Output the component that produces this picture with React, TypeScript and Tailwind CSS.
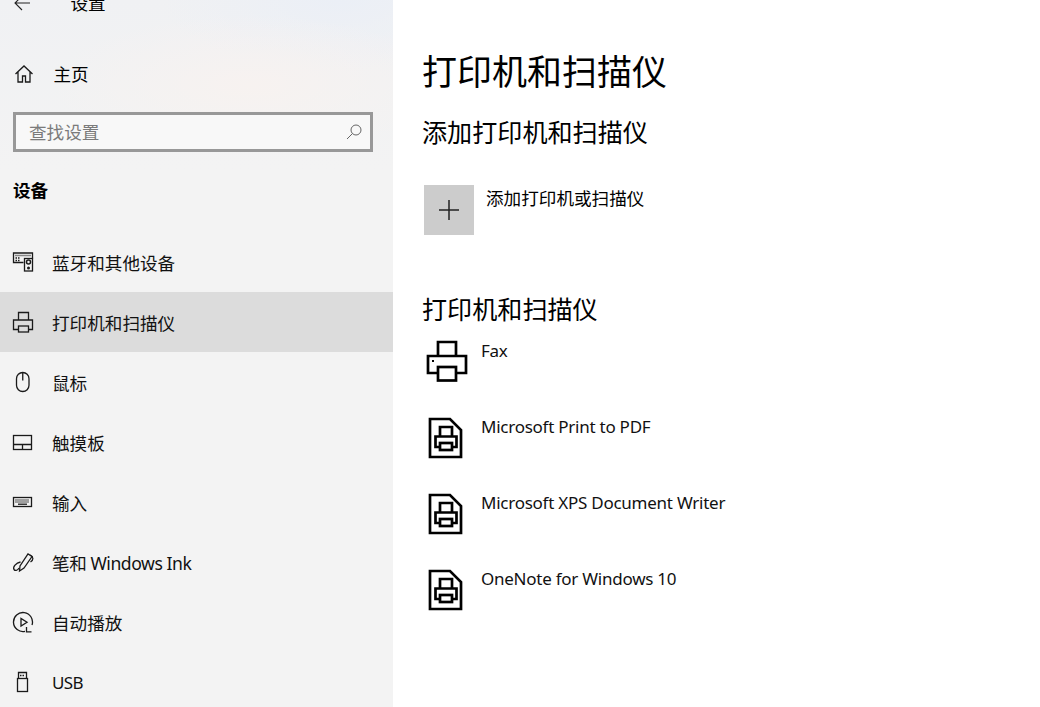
import React from "react";

function Ic({ children }: { children: React.ReactNode }) {
  return (
    <svg width={22} height={22} viewBox="0 0 22 22" fill="none" stroke="currentColor" strokeWidth={1.3} className="shrink-0 text-[#1a1a1a]">
      {children}
    </svg>
  );
}

const icons: Record<string, React.ReactNode> = {
  bt: (
    <Ic>
      <path d="M11.500 11.500H1.500V2H20.500V7.500" />
      <path d="M3.500 4.500h15" strokeDasharray="1 1" strokeWidth="1.500" />
      <path d="M3.500 7h5M3.500 9.500h5" strokeDasharray="1.500 1" strokeWidth="1.300" />
      <rect x="12.500" y="7.500" width="8" height="12.500" strokeWidth="1.300" />
      <circle cx="16.500" cy="11" r="2" strokeWidth="1.500" />
      <circle cx="16.500" cy="17" r="1.500" fill="currentColor" stroke="none" />
    </Ic>
  ),
  printer: (
    <Ic>
      <path d="M6.500 9V1.500H16.500V9M6.500 18.500H1.500V9H20.500V18.500H16.500" />
      <rect x="6.500" y="15" width="10" height="6" />
    </Ic>
  ),
  mouse: (
    <Ic>
      <rect x="4.500" y="1.500" width="12.500" height="19" rx="6.250" />
      <path d="M10.750 2v7.500" />
    </Ic>
  ),
  pad: (
    <Ic>
      <rect x="1.500" y="4.500" width="18" height="14" />
      <path d="M1.500 13.500h18M10.500 13.500v5" />
    </Ic>
  ),
  kbd: (
    <Ic>
      <rect x="1.500" y="6.500" width="18" height="9" />
      <path d="M3.500 9h14M3.500 11h14" strokeDasharray="1 1" />
      <path d="M6 13.200h9" />
    </Ic>
  ),
  pen: (
    <Ic>
      <path d="M7.500 20 8 15 16 3l4 2.500L12 17z" />
      <path d="M18 4c4 2 3.500 5 .5 7" />
      <path d="M8.500 11C4 12 .5 16 2 18.500 3.500 20.500 6 19 7 17" />
    </Ic>
  ),
  play: (
    <Ic>
      <path d="M13 20.300A9.500 9.500 0 1 1 20 14" />
      <path d="M9 7.500v7.500l6-3.750z" />
      <path d="M14.500 16v4.800h5" />
    </Ic>
  ),
  usb: (
    <Ic>
      <rect x="5.500" y="7.500" width="10" height="13" />
      <path d="M6.500 7.500V1.500h8v6" />
      <path d="M8 4.500h5" strokeDasharray="1.500 1" />
    </Ic>
  ),
};

const nav: [string, string, string, boolean?][] = [
  ["bt", "蓝牙和其他设备", "pt-[2px] text-[17.600px] text-[#111]"],
  ["printer", "打印机和扫描仪", "pt-[2px] text-[17.600px] text-[#111]", true],
  ["mouse", "鼠标", "pt-[2px] text-[17.600px] text-[#111]"],
  ["pad", "触摸板", "pt-[2px] text-[17.600px] text-[#111]"],
  ["kbd", "输入", "pt-[2px] text-[17.600px] text-[#111]"],
  ["pen", "笔和 Windows Ink", "pt-[2px] text-[17.600px] tracking-[-0.450px] text-[#111]"],
  ["play", "自动播放", "pt-[2px] text-[17.600px] text-[#111]"],
  ["usb", "USB", "pt-[2px] text-[17px] tracking-[-0.600px] text-[#111]"],
];

function BigPrinter() {
  return (
    <svg width="42" height="42" viewBox="0 0 42 42" fill="none" stroke="#000" strokeWidth="2.700" className="-ml-px shrink-0">
      <path d="M12 16V2h18v14" />
      <path d="M12 33H2V16h38v17H30" />
      <rect x="12" y="27" width="18" height="13.500" />
      <rect x="6" y="20" width="2" height="2" fill="#000" stroke="none" />
    </svg>
  );
}

function DocPrinter() {
  return (
    <svg width="36" height="42" viewBox="0 0 36 42" fill="none" stroke="#000" strokeWidth="2.700" className="mt-[2px] ml-px shrink-0">
      <path d="M2 2h20l11 11v27H2z" />
      <path d="M12 19.500V10h12v9.500" />
      <path d="M12 30H7.500V19.500h21V30H24" />
      <rect x="12" y="26" width="12" height="7" />
    </svg>
  );
}

const list: [string, boolean][] = [
  ["Fax", true],
  ["Microsoft Print to PDF", false],
  ["Microsoft XPS Document Writer", false],
  ["OneNote for Windows 10", false],
];

export default function App() {
  return (
    <div
      className="flex h-[707px] w-[1040px] overflow-hidden bg-white text-black"
      style={{ fontFamily: '"Noto Sans", "Noto Sans CJK SC", sans-serif' }}
    >
      <aside className="flex w-[393px] shrink-0 flex-col bg-[#f3f3f3] bg-[radial-gradient(ellipse_200px_70px_at_250px_85px,#f7f2f0,transparent),radial-gradient(ellipse_180px_70px_at_340px_0px,#ebeff6,transparent),linear-gradient(180deg,#f0f1f3,#f3f3f3_170px)]">
        <div className="-mt-[17px] flex h-[40px] shrink-0 items-center pl-[14px]">
          <svg width="18" height="18" viewBox="0 0 18 18" fill="none" stroke="#222" strokeWidth="1.100" className="shrink-0">
            <path d="M1 9h15M8 2 1 9l7 7" />
          </svg>
          <span className="ml-[38.500px] text-[17.600px]">设置</span>
        </div>
        <div className="mt-[21px] flex h-[60px] shrink-0 items-center pl-[14px]">
          <svg width="20" height="20" viewBox="0 0 20 20" fill="none" stroke="#1a1a1a" strokeWidth="1.300" className="shrink-0">
            <path d="M1.500 10 10 2l8.500 8M4 8v10h4.500v-6h3v6H16V8" />
          </svg>
          <span className="ml-[19.500px] text-[17.600px]">主页</span>
        </div>
        <div className="mt-[8px] mr-[20px] ml-[13px] flex h-[40px] shrink-0 items-center border-[3px] border-[#989898] bg-[#f8f8f8] pr-[8px] pl-[13px]">
          <span className="flex-1 text-[17.600px] text-[#7b7b7b]">查找设置</span>
          <svg width="16" height="16" viewBox="0 0 16 16" fill="none" stroke="#666" strokeWidth="1" className="shrink-0">
            <circle cx="10" cy="6" r="5" />
            <path d="M6.500 9.500 1 15" />
          </svg>
        </div>
        <div className="mt-[22px] flex h-[32px] shrink-0 items-center pl-[13px] text-[17.600px] font-bold">设备</div>
        <nav className="mt-[26px] flex shrink-0 flex-col">
          {nav.map(([ic, label, cls, active]) => (
            <div
              key={label}
              className={
                active
                  ? "flex h-[60px] shrink-0 items-center gap-[18px] bg-[#dcdcdc] pl-[12px]"
                  : "flex h-[60px] shrink-0 items-center gap-[18px] pl-[12px]"
              }
            >
              {icons[ic]}
              <span className={cls}>{label}</span>
            </div>
          ))}
        </nav>
      </aside>
      <main className="flex-1 pl-[29px]">
        <h1 className="mt-[46px] h-[52px] text-[35px] leading-[52px]">打印机和扫描仪</h1>
        <h2 className="mt-[16px] h-[36px] text-[25.100px] leading-[36px]">添加打印机和扫描仪</h2>
        <div className="mt-[35px] flex items-start">
          <div className="ml-[2px] flex h-[50px] w-[50px] items-center justify-center bg-[#cccccc]">
            <svg width="20" height="20" viewBox="0 0 20 20" stroke="#222" strokeWidth="1.500">
              <path d="M10 0v20M0 10h20" />
            </svg>
          </div>
          <span className="ml-[12px] text-[17.600px] leading-[26px]">添加打印机或扫描仪</span>
        </div>
        <h2 className="mt-[56px] h-[36px] text-[25.100px] leading-[36px]">打印机和扫描仪</h2>
        <div className="mt-[13px] flex flex-col">
          {list.map(([name, fax]) => (
            <div key={name} className="flex h-[76px] items-start">
              <div className="flex h-[42px] w-[47px] items-center pl-[5px]">
                {fax ? <BigPrinter /> : <DocPrinter />}
              </div>
              <span className="ml-[12px] -mt-[1px] text-[17px] leading-[24px] tracking-[-0.250px] text-[#111]">{name}</span>
            </div>
          ))}
        </div>
      </main>
    </div>
  );
}
